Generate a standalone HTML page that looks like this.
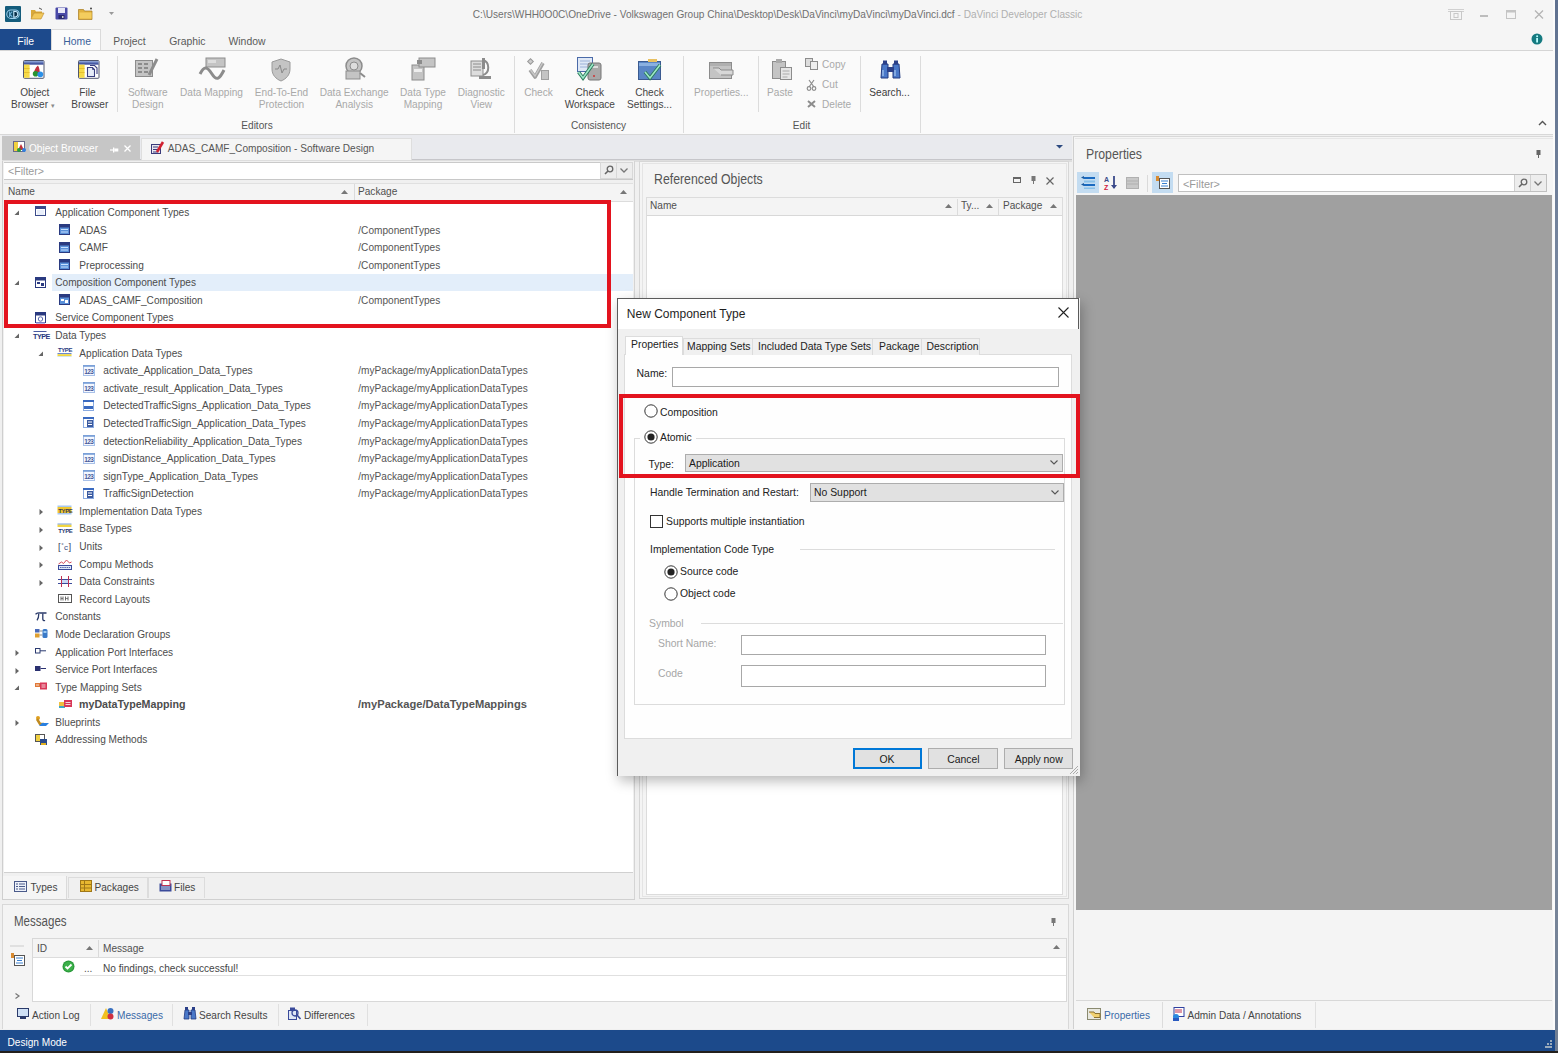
<!DOCTYPE html>
<html><head><meta charset="utf-8">
<style>
*{box-sizing:border-box;margin:0;padding:0}
html,body{width:1558px;height:1053px;overflow:hidden}
body{position:relative;background:#2a2622;font-family:"Liberation Sans",sans-serif;color:#444}
.a{position:absolute}
.t{position:absolute;white-space:nowrap;line-height:1}
svg{overflow:visible}
</style></head><body>

<div class="a" style="left:1555px;top:0px;width:3px;height:1053px;background:linear-gradient(#5f7190,#8d99aa 50%,#6f7d92)"></div>
<div class="a" style="left:0px;top:1051px;width:1558px;height:2px;background:#221f1c"></div>
<div class="a" style="left:0;top:0;width:1555px;height:1051px;background:#f5f5f5;overflow:hidden">
<div class="a" style="left:0px;top:0px;width:1555px;height:29px;background:#f5f5f5"></div>
<svg class="a" style="left:5px;top:6px" width="16" height="16" viewBox="0 0 16 16"><rect x="0" y="0" width="16" height="16" rx="1" fill="#145c7c"/><rect x="1.8" y="4" width="12.4" height="8.4" rx="4.2" fill="#0f4a66" stroke="#9cd0ee" stroke-width="1.1"/><path d="M4.5 5.5v5.5M5 8.2l2.2-2.5M5 8.2l2.2 2.6" stroke="#6ab0d8" stroke-width="1.2"/><path d="M8.8 5.3v5.8c2.8 0 4-1.2 4-2.9s-1.2-2.9-4-2.9z" fill="#0a3048" stroke="#c8ecff" stroke-width="1.1"/></svg>
<svg class="a" style="left:30px;top:7px" width="15" height="13" viewBox="0 0 15 13"><path d="M1 3h4l1 1.5h6v2H4L1 12z" fill="#d9a93a"/><path d="M1 12l3-6h10l-3 6z" fill="#f2c95c" stroke="#b8862a" stroke-width=".6"/><path d="M9 1l3 1.5" stroke="#555" stroke-width="1"/></svg>
<svg class="a" style="left:55px;top:7px" width="13" height="13" viewBox="0 0 13 13"><rect x="0.5" y="0.5" width="12" height="12" fill="#4a4aa8" rx="1"/><rect x="3" y="1" width="7" height="5" fill="#e8e8f8"/><rect x="3.5" y="8" width="6" height="4" fill="#2a2a70"/><rect x="7" y="9" width="1.5" height="2" fill="#ccc"/></svg>
<svg class="a" style="left:78px;top:7px" width="15" height="13" viewBox="0 0 15 13"><path d="M0.5 2.5h5l1 1.5h7.5v8.5H0.5z" fill="#e0b13e" stroke="#a87b20" stroke-width=".7"/><rect x="1.5" y="5.5" width="12" height="6" fill="#f3cd5e"/><circle cx="13" cy="1.5" r="1" fill="#444"/></svg>
<svg class="a" style="left:109px;top:12px" width="6" height="4" viewBox="0 0 6 4"><path d="M0 0h5l-2.5 3z" fill="#999"/></svg>
<div class="t" style="left:472.80px;top:10.00px;font-size:10.1px;color:#707070;font-weight:normal;">C:\Users\WHH0O0C\OneDrive - Volkswagen Group China\Desktop\Desk\DaVinci\myDaVinci\myDaVinci.dcf <span style="color:#b0b0b0">- DaVinci Developer Classic</span></div>
<svg class="a" style="left:1448px;top:9px" width="16" height="11" viewBox="0 0 16 11"><path d="M0 0.5h16M0 2.5h16" stroke="#d0d0d0"/><rect x="2.5" y="2.5" width="11" height="8" fill="none" stroke="#c8c8c8"/><rect x="6" y="4.5" width="4" height="4" fill="none" stroke="#c8c8c8"/></svg>
<div class="a" style="left:1480px;top:15px;width:8px;height:1.5px;background:#bdbdbd"></div>
<svg class="a" style="left:1506px;top:10px" width="11" height="9" viewBox="0 0 11 9"><rect x="0.5" y="0.5" width="9" height="8" fill="none" stroke="#c4c4c4"/><rect x="0.5" y="0.5" width="9" height="2" fill="#c4c4c4"/></svg>
<svg class="a" style="left:1534px;top:10px" width="10" height="9" viewBox="0 0 10 9"><path d="M1 0.5l8 8M9 0.5l-8 8" stroke="#b4b4b4" stroke-width="1.3"/></svg>
<div class="a" style="left:0px;top:29px;width:51px;height:21px;background:#1d4a8c"></div>
<div class="t" style="left:17.30px;top:37.00px;font-size:10.4px;color:#ffffff;font-weight:normal;">File</div>
<div class="a" style="left:51px;top:29px;width:50px;height:22px;background:#fbfbfb;border:1px solid #dadada;border-bottom:none"></div>
<div class="t" style="left:63.30px;top:37.00px;font-size:10.4px;color:#3a5f9a;font-weight:normal;">Home</div>
<div class="t" style="left:113.30px;top:37.00px;font-size:10.4px;color:#5a5a5a;font-weight:normal;">Project</div>
<div class="t" style="left:169.20px;top:37.00px;font-size:10.4px;color:#5a5a5a;font-weight:normal;">Graphic</div>
<div class="t" style="left:228.50px;top:37.00px;font-size:10.4px;color:#5a5a5a;font-weight:normal;">Window</div>
<svg class="a" style="left:1531px;top:33px" width="12" height="12" viewBox="0 0 12 12"><circle cx="6" cy="6" r="5.5" fill="#157a80"/><rect x="5.2" y="5" width="1.8" height="4.5" fill="#bff"/><circle cx="6.1" cy="3.3" r="1" fill="#bff"/></svg>
<div class="a" style="left:0px;top:50px;width:1553px;height:85px;background:#fafafa;border-top:1px solid #d5d5d5;border-bottom:1px solid #d8d8d8"></div>
<div class="a" style="left:117px;top:56px;width:1px;height:56px;background:#dcdcdc"></div>
<div class="a" style="left:514px;top:56px;width:1px;height:77px;background:#dcdcdc"></div>
<div class="a" style="left:683px;top:56px;width:1px;height:77px;background:#dcdcdc"></div>
<div class="a" style="left:758px;top:56px;width:1px;height:56px;background:#dcdcdc"></div>
<div class="a" style="left:860px;top:56px;width:1px;height:56px;background:#dcdcdc"></div>
<div class="a" style="left:920px;top:56px;width:1px;height:77px;background:#dcdcdc"></div>
<!--ribbon buttons-->
<div class="t" style="left:-25.20px;top:88.00px;width:120px;text-align:center;font-size:10.1px;color:#454545;font-weight:normal">Object</div>
<div class="t" style="left:-27.00px;top:100.00px;width:120px;text-align:center;font-size:10.1px;color:#454545;font-weight:normal">Browser <span style="font-size:7px;color:#8a8a8a">&#9662;</span></div>
<div class="t" style="left:27.50px;top:88.00px;width:120px;text-align:center;font-size:10.1px;color:#454545;font-weight:normal">File</div>
<div class="t" style="left:29.80px;top:100.00px;width:120px;text-align:center;font-size:10.1px;color:#454545;font-weight:normal">Browser</div>
<div class="t" style="left:87.80px;top:88.00px;width:120px;text-align:center;font-size:10.1px;color:#a9a9a9;font-weight:normal">Software</div>
<div class="t" style="left:87.80px;top:100.00px;width:120px;text-align:center;font-size:10.1px;color:#a9a9a9;font-weight:normal">Design</div>
<div class="t" style="left:151.50px;top:88.00px;width:120px;text-align:center;font-size:10.1px;color:#a9a9a9;font-weight:normal">Data Mapping</div>
<div class="t" style="left:221.50px;top:88.00px;width:120px;text-align:center;font-size:10.1px;color:#a9a9a9;font-weight:normal">End-To-End</div>
<div class="t" style="left:221.50px;top:100.00px;width:120px;text-align:center;font-size:10.1px;color:#a9a9a9;font-weight:normal">Protection</div>
<div class="t" style="left:294.20px;top:88.00px;width:120px;text-align:center;font-size:10.1px;color:#a9a9a9;font-weight:normal">Data Exchange</div>
<div class="t" style="left:294.20px;top:100.00px;width:120px;text-align:center;font-size:10.1px;color:#a9a9a9;font-weight:normal">Analysis</div>
<div class="t" style="left:363.00px;top:88.00px;width:120px;text-align:center;font-size:10.1px;color:#a9a9a9;font-weight:normal">Data Type</div>
<div class="t" style="left:363.00px;top:100.00px;width:120px;text-align:center;font-size:10.1px;color:#a9a9a9;font-weight:normal">Mapping</div>
<div class="t" style="left:421.30px;top:88.00px;width:120px;text-align:center;font-size:10.1px;color:#a9a9a9;font-weight:normal">Diagnostic</div>
<div class="t" style="left:421.30px;top:100.00px;width:120px;text-align:center;font-size:10.1px;color:#a9a9a9;font-weight:normal">View</div>
<div class="t" style="left:478.50px;top:88.00px;width:120px;text-align:center;font-size:10.1px;color:#a9a9a9;font-weight:normal">Check</div>
<div class="t" style="left:529.80px;top:88.00px;width:120px;text-align:center;font-size:10.1px;color:#454545;font-weight:normal">Check</div>
<div class="t" style="left:529.80px;top:100.00px;width:120px;text-align:center;font-size:10.1px;color:#454545;font-weight:normal">Workspace</div>
<div class="t" style="left:589.50px;top:88.00px;width:120px;text-align:center;font-size:10.1px;color:#454545;font-weight:normal">Check</div>
<div class="t" style="left:589.50px;top:100.00px;width:120px;text-align:center;font-size:10.1px;color:#454545;font-weight:normal">Settings...</div>
<div class="t" style="left:661.30px;top:88.00px;width:120px;text-align:center;font-size:10.1px;color:#a9a9a9;font-weight:normal">Properties...</div>
<div class="t" style="left:720.00px;top:88.00px;width:120px;text-align:center;font-size:10.1px;color:#a9a9a9;font-weight:normal">Paste</div>
<div class="t" style="left:822.00px;top:60.00px;font-size:10.1px;color:#a9a9a9;font-weight:normal;">Copy</div>
<div class="t" style="left:822.00px;top:80.00px;font-size:10.1px;color:#a9a9a9;font-weight:normal;">Cut</div>
<div class="t" style="left:822.00px;top:100.00px;font-size:10.1px;color:#a9a9a9;font-weight:normal;">Delete</div>
<div class="t" style="left:829.50px;top:88.00px;width:120px;text-align:center;font-size:10.1px;color:#3a3a3a;font-weight:normal">Search...</div>
<div class="t" style="left:197.00px;top:121.00px;width:120px;text-align:center;font-size:10.1px;color:#555;font-weight:normal">Editors</div>
<div class="t" style="left:538.50px;top:121.00px;width:120px;text-align:center;font-size:10.1px;color:#555;font-weight:normal">Consistency</div>
<div class="t" style="left:741.50px;top:121.00px;width:120px;text-align:center;font-size:10.1px;color:#555;font-weight:normal">Edit</div>
<svg class="a" style="left:1538px;top:120px" width="9" height="6" viewBox="0 0 9 6"><path d="M1 5l3.5-3.5L8 5" fill="none" stroke="#555" stroke-width="1.4"/></svg>
<svg class="a" style="left:23px;top:60px" width="22" height="19" viewBox="0 0 22 19"><defs><linearGradient id="tb" x1="0" y1="0" x2="0" y2="1"><stop offset="0" stop-color="#9ab0e0"/><stop offset="1" stop-color="#22348a"/></linearGradient></defs><rect x="0.5" y="0.5" width="20.5" height="17.8" rx="1" fill="#fff" stroke="#50566e"/><rect x="1" y="1" width="19.5" height="3.6" fill="url(#tb)"/><rect x="1" y="4.6" width="5.6" height="13.2" fill="#f6da48"/><path d="M1 8.5h5.6M1 12.5h5.6" stroke="#e2b82a" stroke-width=".8"/><path d="M10.5 14.5C11 10 13.5 6.5 15 5.5c1.2 2 2.2 5.5 1.5 8.5z" fill="#c2303e"/><circle cx="12.6" cy="13.8" r="2.8" fill="#2a9432"/><circle cx="17.3" cy="14.3" r="2.9" fill="#2a90e8"/></svg>
<svg class="a" style="left:78px;top:60px" width="22" height="19" viewBox="0 0 22 19"><defs><linearGradient id="tb" x1="0" y1="0" x2="0" y2="1"><stop offset="0" stop-color="#9ab0e0"/><stop offset="1" stop-color="#22348a"/></linearGradient></defs><rect x="0.5" y="0.5" width="20.5" height="17.8" rx="1" fill="#fff" stroke="#50566e"/><rect x="1" y="1" width="19.5" height="3.6" fill="url(#tb)"/><rect x="1" y="4.6" width="5.6" height="13.2" fill="#f6da48"/><path d="M1 8.5h5.6M1 12.5h5.6" stroke="#e2b82a" stroke-width=".8"/><path d="M9.5 7.5h5l2 2v7h-7z" fill="#e6ecf8" stroke="#3a3f80" stroke-width="1.1"/><path d="M12 5.5h4.5l2.5 2.5v6" fill="none" stroke="#3a3f80" stroke-width="1.1"/><path d="M14.5 7.5v2h2" fill="none" stroke="#3a3f80" stroke-width=".8"/></svg>
<svg class="a" style="left:135px;top:57px" width="24" height="21" viewBox="0 0 24 21"><rect x="0.5" y="3.5" width="17" height="16" fill="#c4c4c4" stroke="#8c8c8c"/><rect x="3" y="6" width="4" height="2" fill="#8c8c8c"/><rect x="9" y="6" width="4" height="2" fill="#8c8c8c"/><rect x="3" y="10" width="4" height="2" fill="#8c8c8c"/><rect x="9" y="10" width="4" height="2" fill="#8c8c8c"/><rect x="3" y="14" width="4" height="2" fill="#8c8c8c"/><rect x="9" y="14" width="4" height="2" fill="#8c8c8c"/><path d="M14 18L22 2" stroke="#8c8c8c" stroke-width="3"/></svg>
<svg class="a" style="left:199px;top:57px" width="27" height="23" viewBox="0 0 27 23"><rect x="7" y="1" width="19" height="9" fill="#c4c4c4" stroke="#8c8c8c"/><rect x="9" y="3" width="8" height="3" fill="#ddd"/><path d="M1 17c4-8 7-8 12 0s8 4 12-4" fill="none" stroke="#8c8c8c" stroke-width="3"/></svg>
<svg class="a" style="left:271px;top:58px" width="20" height="23" viewBox="0 0 20 23"><path d="M10 1l9 3v7c0 6-4 10-9 12C5 21 1 17 1 11V4z" fill="#c4c4c4" stroke="#9a9a9a"/><path d="M4 11h3l2-4 2 8 2-4h3" fill="none" stroke="#888" stroke-width="1"/></svg>
<svg class="a" style="left:343px;top:57px" width="24" height="24" viewBox="0 0 24 24"><circle cx="11" cy="9" r="8" fill="#c4c4c4" stroke="#8c8c8c" stroke-width="1.5"/><circle cx="11" cy="9" r="4" fill="#ddd" stroke="#8c8c8c"/><rect x="3" y="14" width="14" height="8" fill="#c4c4c4" stroke="#8c8c8c"/><path d="M17 16l5 4" stroke="#8c8c8c" stroke-width="2"/></svg>
<svg class="a" style="left:411px;top:57px" width="25" height="24" viewBox="0 0 25 24"><rect x="1" y="8" width="12" height="15" fill="#c4c4c4" stroke="#8c8c8c"/><rect x="3" y="12" width="8" height="3" fill="#eee"/><rect x="8" y="1" width="16" height="9" fill="#c4c4c4" stroke="#8c8c8c"/><rect x="6" y="3" width="5" height="4" fill="#8c8c8c"/></svg>
<svg class="a" style="left:470px;top:57px" width="23" height="24" viewBox="0 0 23 24"><rect x="1" y="4" width="12" height="15" fill="#ddd" stroke="#8c8c8c"/><path d="M3 7h8M3 10h8M3 13h8" stroke="#8c8c8c"/><path d="M13 3c7 2 7 13 0 15" fill="none" stroke="#8c8c8c" stroke-width="2"/><rect x="12" y="1" width="3" height="11" fill="#8c8c8c"/><rect x="9" y="19" width="12" height="3" fill="#8c8c8c"/></svg>
<svg class="a" style="left:527px;top:57px" width="23" height="24" viewBox="0 0 23 24"><rect x="1.5" y="2.5" width="4" height="4" fill="#ccc" stroke="#999" transform="rotate(45 3.5 4.5)"/><path d="M3 13l5 7 8-14" fill="none" stroke="#a0a0a0" stroke-width="3.6" stroke-linejoin="round"/><path d="M3.5 13l4.5 6 7.5-13" fill="none" stroke="#c8c8c8" stroke-width="1.4"/><rect x="14.5" y="13.5" width="7" height="9" fill="#c4c4c4" stroke="#a0a0a0"/></svg>
<svg class="a" style="left:577px;top:57px" width="25" height="24" viewBox="0 0 25 24"><rect x="0.5" y="0.5" width="15" height="14" fill="#dfe8f6" stroke="#4a6aa8"/><path d="M3 4h10M3 7h10M3 10h8" stroke="#9cb2d8"/><rect x="11" y="6" width="13" height="17" rx="2" fill="#a8a8a8" stroke="#777"/><rect x="14" y="9" width="7" height="2" fill="#ddd"/><circle cx="17" cy="19" r="1" fill="#c33"/><path d="M1.5 15l4.5 6 10-14" fill="none" stroke="#2a7a5a" stroke-width="3.4"/><path d="M1.5 15l4.5 6 10-14" fill="none" stroke="#9ee8c8" stroke-width="1.6"/></svg>
<svg class="a" style="left:638px;top:58px" width="24" height="23" viewBox="0 0 24 23"><rect x="0.5" y="3.5" width="22" height="18" fill="#5a86c6" stroke="#3a5a90"/><rect x="10" y="1" width="9" height="3" fill="#e8c060"/><rect x="1" y="5" width="21" height="3" fill="#8ab0e0"/><path d="M7 14l5 6 10-13" fill="none" stroke="#2a7a5a" stroke-width="3.4"/><path d="M7 14l5 6 10-13" fill="none" stroke="#9ee8c8" stroke-width="1.6"/></svg>
<svg class="a" style="left:709px;top:60px" width="26" height="20" viewBox="0 0 26 20"><rect x="0.5" y="2.5" width="22" height="16" fill="#c4c4c4" stroke="#8c8c8c"/><rect x="1" y="3" width="21" height="3" fill="#b0b0b0"/><path d="M4 8h6l2 2h12v5H12" fill="#d8d8d8" stroke="#8c8c8c"/></svg>
<svg class="a" style="left:772px;top:58px" width="21" height="23" viewBox="0 0 21 23"><rect x="0.5" y="3.5" width="13" height="17" fill="#c4c4c4" stroke="#8c8c8c"/><rect x="4" y="1" width="6" height="4" fill="#aaa"/><rect x="8.5" y="9.5" width="11" height="12" fill="#e6e6e6" stroke="#8c8c8c"/><path d="M10.5 13h7M10.5 16h7M10.5 19h5" stroke="#aaa"/></svg>
<svg class="a" style="left:805px;top:58px" width="13" height="12" viewBox="0 0 13 12"><rect x="0.5" y="0.5" width="7" height="8" fill="#ddd" stroke="#8c8c8c"/><rect x="5.5" y="3.5" width="7" height="8" fill="#eee" stroke="#8c8c8c"/></svg>
<svg class="a" style="left:807px;top:80px" width="9" height="11" viewBox="0 0 9 11"><path d="M2 0l5 7M7 0L2 7" stroke="#8c8c8c" stroke-width="1.2"/><circle cx="2" cy="8.5" r="1.8" fill="none" stroke="#8c8c8c" stroke-width="1.2"/><circle cx="7" cy="8.5" r="1.8" fill="none" stroke="#8c8c8c" stroke-width="1.2"/></svg>
<svg class="a" style="left:807px;top:100px" width="9" height="8" viewBox="0 0 9 8"><path d="M1 1l7 6M8 1L1 7" stroke="#8c8c8c" stroke-width="2"/></svg>
<svg class="a" style="left:880px;top:60px" width="21" height="20" viewBox="0 0 21 20"><path d="M2 4h6v14H1z" fill="#4a78c8" stroke="#223a80"/><path d="M13 4h6l1 14h-7z" fill="#4a78c8" stroke="#223a80"/><rect x="3" y="0.5" width="4" height="4" fill="#2a3f88"/><rect x="14" y="0.5" width="4" height="4" fill="#2a3f88"/><rect x="7" y="7" width="7" height="5" fill="#2a3f88"/><path d="M3 10v6M15 10v6" stroke="#a8c8f0" stroke-width="1.2"/></svg>
<div class="a" style="left:0px;top:135px;width:1555px;height:896px;background:#f0f0f0"></div>
<div class="a" style="left:2px;top:135px;width:1070px;height:24px;background:#e9eaee"></div>
<div class="a" style="left:2px;top:159px;width:1070px;height:1px;background:#c6c6ca"></div>
<div class="a" style="left:2px;top:160px;width:1070px;height:2px;background:#dedede"></div>
<div class="a" style="left:2px;top:136px;width:138px;height:24px;background:#c6c6c6"></div>
<svg class="a" style="left:13px;top:141px" width="14" height="12" viewBox="0 0 14 12"><rect x="0.5" y="0.5" width="11" height="10" fill="#fff" stroke="#6a6a8a"/><rect x="1" y="1" width="4" height="9" fill="#f0d040"/><path d="M5 9l3-6 3 6z" fill="#c03038"/><circle cx="6" cy="9" r="2" fill="#2a9a3a"/><circle cx="11" cy="9" r="2" fill="#3080e0"/></svg>
<div class="t" style="left:29.00px;top:144.00px;font-size:10.1px;color:#ffffff;font-weight:normal;">Object Browser</div>
<svg class="a" style="left:110px;top:146px" width="9" height="8" viewBox="0 0 9 8"><path d="M0 4h3" stroke="#fff" stroke-width="1.2"/><rect x="3" y="1.5" width="1.3" height="5" fill="#fff"/><rect x="4.3" y="2.5" width="4" height="3" fill="#fff"/></svg>
<svg class="a" style="left:124px;top:145px" width="7" height="7" viewBox="0 0 7 7"><path d="M0.5 0.5l6 6M6.5 0.5l-6 6" stroke="#fff" stroke-width="1.3"/></svg>
<div class="a" style="left:141px;top:138px;width:271px;height:22px;background:#f5f5f5;border:1px solid #dedede;border-bottom:none"></div>
<svg class="a" style="left:151px;top:141px" width="14" height="13" viewBox="0 0 14 13"><rect x="0.5" y="3.5" width="9" height="9" fill="#e8e8f0" stroke="#3a3a7a"/><path d="M2 6h5M2 8.5h5M2 11h5" stroke="#3a3a7a"/><path d="M6 11l6-10" stroke="#d02030" stroke-width="2.6"/></svg>
<div class="t" style="left:167.80px;top:144.00px;font-size:10.1px;color:#555;font-weight:normal;">ADAS_CAMF_Composition - Software Design</div>
<svg class="a" style="left:1056px;top:145px" width="8" height="4" viewBox="0 0 8 4"><path d="M0 0h7l-3.5 3.5z" fill="#2d4a80"/></svg>
<div class="a" style="left:2px;top:161px;width:633px;height:739px;background:#f0f0f0;border-left:1px solid #cfcfcf;border-right:1px solid #d4d4d4"></div>
<div class="a" style="left:4px;top:162px;width:629px;height:18px;background:#fff;border-top:1px solid #cacaca;border-bottom:1px solid #c8c8c8"></div>
<div class="t" style="left:8.00px;top:167.00px;font-size:10.1px;color:#9a9a9a;font-weight:normal;transform:scaleX(1.0514);transform-origin:0 0;">&lt;Filter&gt;</div>
<div class="a" style="left:600px;top:162px;width:17px;height:17px;background:#ededed;border:1px solid #d8d8d8"></div>
<div class="a" style="left:616px;top:162px;width:17px;height:17px;background:#ededed;border:1px solid #d8d8d8"></div>
<svg class="a" style="left:604px;top:165px" width="10" height="10" viewBox="0 0 10 10"><circle cx="6" cy="4" r="2.8" fill="none" stroke="#666" stroke-width="1.3"/><path d="M4 6L1 9" stroke="#666" stroke-width="1.6"/></svg>
<svg class="a" style="left:620px;top:168px" width="8" height="5" viewBox="0 0 8 5"><path d="M0.5 0.5L4 4l3.5-3.5" fill="none" stroke="#777" stroke-width="1.3"/></svg>
<div class="a" style="left:4px;top:183px;width:629px;height:19px;background:#f4f4f4;border-top:1px solid #e0e0e0;border-bottom:1px solid #dcdcdc"></div>
<div class="a" style="left:354px;top:184px;width:1px;height:17px;background:#dadada"></div>
<div class="t" style="left:8.00px;top:187.00px;font-size:10.1px;color:#505050;font-weight:normal;">Name</div>
<div class="t" style="left:358.00px;top:187.00px;font-size:10.1px;color:#505050;font-weight:normal;">Package</div>
<svg class="a" style="left:341px;top:190px" width="7" height="4" viewBox="0 0 7 4"><path d="M0 4h7L3.5 0z" fill="#777"/></svg>
<svg class="a" style="left:620px;top:190px" width="7" height="4" viewBox="0 0 7 4"><path d="M0 4h7L3.5 0z" fill="#777"/></svg>
<div class="a" style="left:4px;top:202px;width:629px;height:671px;background:#fff"></div>
<div class="a" style="left:4px;top:872px;width:629px;height:1px;background:#d0d0d0"></div>
<div class="a" style="left:3px;top:899px;width:632px;height:1px;background:#d0d0d0"></div>
<div class="a" style="left:3px;top:876px;width:64px;height:23px;background:#f5f5f5;border-right:1px solid #dadada"></div>
<div class="a" style="left:68px;top:877px;width:80px;height:21px;background:#f0f0f0;border:1px solid #dcdcdc;border-bottom:none"></div>
<div class="a" style="left:148px;top:877px;width:57px;height:21px;background:#f0f0f0;border:1px solid #dcdcdc;border-bottom:none"></div>
<svg class="a" style="left:14px;top:881px" width="13" height="11" viewBox="0 0 13 11"><rect x="0.5" y="0.5" width="12" height="10" fill="#eef2fa" stroke="#4a5a8a"/><path d="M2 3h2M5 3h6M2 5.5h2M5 5.5h6M2 8h2M5 8h6" stroke="#4a5a8a"/></svg>
<div class="t" style="left:30.50px;top:883.00px;font-size:10.1px;color:#454545;font-weight:normal;">Types</div>
<svg class="a" style="left:80px;top:880px" width="12" height="12" viewBox="0 0 12 12"><rect x="0.5" y="0.5" width="11" height="11" fill="#e8b830" stroke="#a07818"/><path d="M0.5 4.5h11M0.5 8h11M4.5 0.5v11" stroke="#a07818"/></svg>
<div class="t" style="left:94.50px;top:883.00px;font-size:10.1px;color:#454545;font-weight:normal;">Packages</div>
<svg class="a" style="left:159px;top:880px" width="13" height="12" viewBox="0 0 13 12"><rect x="0.5" y="3.5" width="12" height="8" fill="#3a4a9a"/><rect x="3" y="0.5" width="8" height="5" fill="#fff" stroke="#c03050"/><path d="M2 7h9M2 9h9" stroke="#cfd8f0"/></svg>
<div class="t" style="left:174.00px;top:883.00px;font-size:10.1px;color:#454545;font-weight:normal;">Files</div>
<div class="a" style="left:639px;top:161px;width:430px;height:738px;background:#f4f4f4;border:1px solid #d6d6d6"></div>
<div class="a" style="left:642px;top:163px;width:425px;height:734px;border:1px solid #e4e4e4"></div>
<div class="t" style="left:654.30px;top:172.00px;font-size:14px;color:#555;font-weight:normal;transform:scaleX(0.8785);transform-origin:0 0;">Referenced Objects</div>
<svg class="a" style="left:1013px;top:177px" width="8" height="6" viewBox="0 0 8 6"><rect x="0.5" y="0.5" width="7" height="5" fill="none" stroke="#666"/><rect x="0.5" y="0.5" width="7" height="1.5" fill="#666"/></svg>
<svg class="a" style="left:1031px;top:176px" width="5" height="8" viewBox="0 0 5 8"><rect x="0.5" y="0" width="4" height="5" fill="#777"/><rect x="2" y="5" width="1" height="3" fill="#777"/></svg>
<svg class="a" style="left:1046px;top:177px" width="8" height="8" viewBox="0 0 8 8"><path d="M0.5 0.5l7 7M7.5 0.5l-7 7" stroke="#666" stroke-width="1.2"/></svg>
<div class="a" style="left:646px;top:197px;width:417px;height:698px;background:#fff;border:1px solid #dcdcdc"></div>
<div class="a" style="left:647px;top:198px;width:415px;height:18px;background:#f4f4f4;border-bottom:1px solid #d8d8d8"></div>
<div class="a" style="left:957px;top:199px;width:1px;height:16px;background:#dcdcdc"></div>
<div class="a" style="left:998px;top:199px;width:1px;height:16px;background:#dcdcdc"></div>
<div class="t" style="left:650.00px;top:201.00px;font-size:10.1px;color:#505050;font-weight:normal;">Name</div>
<div class="t" style="left:961.00px;top:201.00px;font-size:10.1px;color:#505050;font-weight:normal;">Ty...</div>
<div class="t" style="left:1003.00px;top:201.00px;font-size:10.1px;color:#505050;font-weight:normal;">Package</div>
<svg class="a" style="left:945px;top:204px" width="7" height="4" viewBox="0 0 7 4"><path d="M0 4h7L3.5 0z" fill="#777"/></svg>
<svg class="a" style="left:986px;top:204px" width="7" height="4" viewBox="0 0 7 4"><path d="M0 4h7L3.5 0z" fill="#777"/></svg>
<svg class="a" style="left:1050px;top:204px" width="7" height="4" viewBox="0 0 7 4"><path d="M0 4h7L3.5 0z" fill="#777"/></svg>
<div class="a" style="left:1073px;top:136px;width:480px;height:893px;background:#f5f5f5;border-left:1px solid #d0d0d0;border-top:1px solid #d8d8d8"></div>
<div class="a" style="left:1075px;top:138px;width:478px;height:1px;background:#e6e6e6"></div>
<div class="t" style="left:1086.00px;top:147.00px;font-size:14px;color:#555;font-weight:normal;transform:scaleX(0.8776);transform-origin:0 0;">Properties</div>
<svg class="a" style="left:1536px;top:150px" width="5" height="8" viewBox="0 0 5 8"><rect x="0.5" y="0" width="4" height="5" fill="#666"/><rect x="2" y="5" width="1" height="3" fill="#666"/></svg>
<div class="a" style="left:1077px;top:172px;width:22px;height:21px;background:#c3dcf1"></div>
<svg class="a" style="left:1081px;top:176px" width="14" height="13" viewBox="0 0 14 13"><path d="M0 1.5l3-1.5v3z" fill="#1a5aa0"/><rect x="3" y="1" width="11" height="2" fill="#1a6ac0"/><rect x="3" y="4.5" width="11" height="2" fill="#8ac0e8"/><path d="M0 8.5l3-1.5v3z" fill="#1a5aa0"/><rect x="3" y="8" width="11" height="2" fill="#1a6ac0"/><rect x="3" y="11.5" width="11" height="1.5" fill="#8ac0e8"/></svg>
<svg class="a" style="left:1104px;top:176px" width="14" height="14" viewBox="0 0 14 14"><text x="0" y="6" font-size="7" font-weight="bold" fill="#3a4a8a" font-family="Liberation Sans">A</text><text x="0" y="13.5" font-size="7" font-weight="bold" fill="#d02040" font-family="Liberation Sans">Z</text><path d="M10 0v12" stroke="#3a4a8a" stroke-width="1.8"/><path d="M7 9l3 4 3-4z" fill="#3a4a8a"/></svg>
<svg class="a" style="left:1126px;top:177px" width="13" height="12" viewBox="0 0 13 12"><rect x="0.5" y="0.5" width="12" height="11" fill="#c8c8c8" stroke="#b0b0b0"/><path d="M1 4h11M1 7h11" stroke="#b0b0b0"/></svg>
<div class="a" style="left:1147px;top:175px;width:1px;height:17px;background:#dadada"></div>
<div class="a" style="left:1152px;top:172px;width:21px;height:21px;background:#c3dcf1"></div>
<svg class="a" style="left:1156px;top:176px" width="14" height="13" viewBox="0 0 14 13"><rect x="3.5" y="2.5" width="10" height="10" fill="#fff" stroke="#555"/><rect x="0" y="0" width="3" height="5" fill="#d88a30"/><path d="M5 5h7M6 7.5h5M5 10h7" stroke="#3a80d0"/></svg>
<div class="a" style="left:1178px;top:174px;width:369px;height:18px;background:#fff;border:1px solid #c0c0c0"></div>
<div class="t" style="left:1182.60px;top:180.00px;font-size:10.1px;color:#9a9a9a;font-weight:normal;transform:scaleX(1.0806);transform-origin:0 0;">&lt;Filter&gt;</div>
<div class="a" style="left:1514px;top:175px;width:17px;height:16px;background:#ededed;border-left:1px solid #d0d0d0"></div>
<div class="a" style="left:1530px;top:175px;width:16px;height:16px;background:#ededed;border-left:1px solid #d0d0d0"></div>
<svg class="a" style="left:1518px;top:178px" width="10" height="10" viewBox="0 0 10 10"><circle cx="6" cy="4" r="2.8" fill="none" stroke="#666" stroke-width="1.3"/><path d="M4 6L1 9" stroke="#666" stroke-width="1.6"/></svg>
<svg class="a" style="left:1534px;top:181px" width="8" height="5" viewBox="0 0 8 5"><path d="M0.5 0.5L4 4l3.5-3.5" fill="none" stroke="#777" stroke-width="1.3"/></svg>
<div class="a" style="left:1076px;top:195px;width:476px;height:715px;background:#a0a0a0"></div>
<div class="a" style="left:1076px;top:910px;width:476px;height:91px;background:#f4f4f4;border-bottom:1px solid #d8d8d8"></div>
<div class="a" style="left:1076px;top:1002px;width:87px;height:26px;background:#f5f5f5;border-right:1px solid #dcdcdc"></div>
<svg class="a" style="left:1087px;top:1008px" width="14" height="12" viewBox="0 0 14 12"><rect x="0.5" y="0.5" width="13" height="11" fill="#e8e8e0" stroke="#8a8a70"/><path d="M2 4h5l1 1.5h5v4H7" fill="#f0d070" stroke="#8a7030"/></svg>
<div class="t" style="left:1104.00px;top:1011.00px;font-size:10.1px;color:#3a6aa8;font-weight:normal;">Properties</div>
<div class="a" style="left:1163px;top:1002px;width:153px;height:26px;background:#f5f5f5;border-right:1px solid #e0e0e0"></div>
<svg class="a" style="left:1172px;top:1007px" width="13" height="14" viewBox="0 0 13 14"><rect x="2" y="0.5" width="10" height="9" fill="#fff" stroke="#3040a0"/><path d="M3 3h7M3 5h7" stroke="#c03050"/><circle cx="4" cy="10" r="3" fill="#2a8ae0"/><rect x="1" y="11" width="6" height="3" fill="#2a5ac0"/></svg>
<div class="t" style="left:1187.50px;top:1011.00px;font-size:10.1px;color:#454545;font-weight:normal;">Admin Data / Annotations</div>
<div class="a" style="left:2px;top:904px;width:1067px;height:125px;background:#f4f4f4;border:1px solid #d8d8d8;border-bottom:none"></div>
<div class="t" style="left:14.30px;top:914.00px;font-size:14px;color:#555;font-weight:normal;transform:scaleX(0.8244);transform-origin:0 0;">Messages</div>
<svg class="a" style="left:1051px;top:918px" width="5" height="8" viewBox="0 0 5 8"><rect x="0.5" y="0" width="4" height="5" fill="#777"/><rect x="2" y="5" width="1" height="3" fill="#777"/></svg>
<div class="a" style="left:10px;top:945px;width:14px;height:2px;background:#e0e0e0"></div>
<svg class="a" style="left:11px;top:953px" width="14" height="13" viewBox="0 0 14 13"><rect x="3.5" y="2.5" width="10" height="10" fill="#fff" stroke="#555"/><rect x="0" y="0" width="3" height="5" fill="#d88a30"/><path d="M5 5h7M6 7.5h5M5 10h7" stroke="#3a80d0"/></svg>
<svg class="a" style="left:15px;top:993px" width="5" height="6" viewBox="0 0 5 6"><path d="M0.5 0.5L4 3 0.5 5.5" fill="none" stroke="#777" stroke-width="1.2"/></svg>
<div class="a" style="left:32px;top:938px;width:1035px;height:64px;background:#fff;border:1px solid #d8d8d8"></div>
<div class="a" style="left:33px;top:939px;width:1033px;height:19px;background:#f4f4f4;border-bottom:1px solid #dcdcdc"></div>
<div class="a" style="left:98px;top:940px;width:1px;height:17px;background:#dadada"></div>
<div class="t" style="left:37.00px;top:944.00px;font-size:10.1px;color:#505050;font-weight:normal;">ID</div>
<div class="t" style="left:103.00px;top:944.00px;font-size:10.1px;color:#505050;font-weight:normal;">Message</div>
<svg class="a" style="left:86px;top:946px" width="7" height="4" viewBox="0 0 7 4"><path d="M0 4h7L3.5 0z" fill="#777"/></svg>
<svg class="a" style="left:1053px;top:945px" width="7" height="4" viewBox="0 0 7 4"><path d="M0 4h7L3.5 0z" fill="#777"/></svg>
<div class="a" style="left:80px;top:975px;width:986px;height:1px;background:#e0e0e0"></div>
<svg class="a" style="left:62px;top:960px" width="13" height="13" viewBox="0 0 13 13"><circle cx="6.5" cy="6.5" r="6" fill="#2a9a3a"/><circle cx="6.5" cy="6.5" r="4.8" fill="#3cb04a"/><path d="M3.5 6.5l2 2 4-4" fill="none" stroke="#fff" stroke-width="1.8"/></svg>
<div class="t" style="left:84.00px;top:964.00px;font-size:10.1px;color:#505050;font-weight:normal;">...</div>
<div class="t" style="left:103.00px;top:964.00px;font-size:10.1px;color:#454545;font-weight:normal;">No findings, check successful!</div>
<div class="a" style="left:90px;top:1004px;width:1px;height:22px;background:#e0e0e0"></div>
<div class="a" style="left:172px;top:1004px;width:1px;height:22px;background:#e0e0e0"></div>
<div class="a" style="left:278px;top:1004px;width:1px;height:22px;background:#e0e0e0"></div>
<div class="a" style="left:367px;top:1004px;width:1px;height:22px;background:#e0e0e0"></div>
<svg class="a" style="left:17px;top:1008px" width="12" height="12" viewBox="0 0 12 12"><rect x="0.5" y="0.5" width="11" height="8" fill="#cfe0f5" stroke="#2a3a6a"/><rect x="3" y="9" width="6" height="2" fill="#2a3a6a"/></svg>
<div class="t" style="left:32.00px;top:1011.00px;font-size:10.1px;color:#454545;font-weight:normal;">Action Log</div>
<svg class="a" style="left:101px;top:1007px" width="13" height="13" viewBox="0 0 13 13"><path d="M5 1l5 11H0z" fill="#f0c020"/><circle cx="9.5" cy="4" r="3" fill="#3a70c0"/><circle cx="9.5" cy="9.5" r="3" fill="#d03040"/></svg>
<div class="t" style="left:117.00px;top:1011.00px;font-size:10.1px;color:#3a6aa8;font-weight:normal;">Messages</div>
<svg class="a" style="left:184px;top:1007px" width="12" height="13" viewBox="0 0 12 13"><path d="M1 3h4v9H0z" fill="#4a78c8" stroke="#223a80" stroke-width=".8"/><path d="M7 3h4l1 9H7z" fill="#4a78c8" stroke="#223a80" stroke-width=".8"/><rect x="4" y="5" width="4" height="3" fill="#2a3f88"/><rect x="1" y="0" width="3" height="3" fill="#2a3f88"/><rect x="8" y="0" width="3" height="3" fill="#2a3f88"/></svg>
<div class="t" style="left:199.00px;top:1011.00px;font-size:10.1px;color:#454545;font-weight:normal;">Search Results</div>
<svg class="a" style="left:288px;top:1007px" width="13" height="13" viewBox="0 0 13 13"><rect x="0.5" y="3.5" width="8" height="9" fill="#dfe6f5" stroke="#3a4a9a"/><circle cx="7" cy="6" r="3" fill="none" stroke="#3a4a9a" stroke-width="1.3"/><path d="M9 8l3.5 4" stroke="#3a4a9a" stroke-width="1.6"/><rect x="2" y="0.5" width="5" height="3" fill="#3a4a9a"/></svg>
<div class="t" style="left:304.00px;top:1011.00px;font-size:10.1px;color:#454545;font-weight:normal;">Differences</div>
<div class="a" style="left:0px;top:1030px;width:1555px;height:21px;background:#1c4a8b"></div>
<div class="t" style="left:7.50px;top:1038.00px;font-size:10.1px;color:#ffffff;font-weight:normal;">Design Mode</div>
<svg class="a" style="left:1545px;top:1040px" width="8" height="8" viewBox="0 0 8 8"><rect x="5" y="0" width="2" height="2" fill="#9ab"/><rect x="2" y="3" width="2" height="2" fill="#9ab"/><rect x="5" y="3" width="2" height="2" fill="#9ab"/><rect x="0" y="6" width="7" height="2" fill="#9ab"/></svg>
<div class="a" style="left:1553px;top:0px;width:2px;height:1030px;background:#fbfbfb"></div>
<svg class="a" style="left:14px;top:210px" width="6" height="6" viewBox="0 0 6 6"><path d="M5 0.5v4.5H0.5z" fill="#666"/></svg>
<svg class="a" style="left:34.5px;top:206px" width="13" height="12" viewBox="0 0 13 12"><rect x="0.5" y="0.5" width="10" height="9" fill="#fff" stroke="#3a4a8a"/><rect x="1" y="1" width="9" height="2" fill="#3a4a8a"/><rect x="2" y="4" width="7" height="5" fill="#e8eefa"/></svg>
<div class="t" style="left:55.30px;top:208.00px;font-size:10.1px;color:#4c4c4c;font-weight:normal;">Application Component Types</div>
<svg class="a" style="left:58.5px;top:224px" width="13" height="12" viewBox="0 0 13 12"><rect x="0.5" y="0.5" width="10" height="10" fill="#5a90d8" stroke="#2a3a80"/><rect x="1" y="1" width="9" height="2.5" fill="#2a3a80"/><path d="M2 5.5h7M2 8h7" stroke="#c8e0ff" stroke-width="1"/></svg>
<div class="t" style="left:79.30px;top:226.00px;font-size:10.1px;color:#4c4c4c;font-weight:normal;">ADAS</div>
<div class="t" style="left:358.30px;top:226.00px;font-size:10.1px;color:#555555;font-weight:normal;">/ComponentTypes</div>
<svg class="a" style="left:58.5px;top:242px" width="13" height="12" viewBox="0 0 13 12"><rect x="0.5" y="0.5" width="10" height="10" fill="#5a90d8" stroke="#2a3a80"/><rect x="1" y="1" width="9" height="2.5" fill="#2a3a80"/><path d="M2 5.5h7M2 8h7" stroke="#c8e0ff" stroke-width="1"/></svg>
<div class="t" style="left:79.30px;top:243.00px;font-size:10.1px;color:#4c4c4c;font-weight:normal;">CAMF</div>
<div class="t" style="left:358.30px;top:243.00px;font-size:10.1px;color:#555555;font-weight:normal;">/ComponentTypes</div>
<svg class="a" style="left:58.5px;top:259px" width="13" height="12" viewBox="0 0 13 12"><rect x="0.5" y="0.5" width="10" height="10" fill="#5a90d8" stroke="#2a3a80"/><rect x="1" y="1" width="9" height="2.5" fill="#2a3a80"/><path d="M2 5.5h7M2 8h7" stroke="#c8e0ff" stroke-width="1"/></svg>
<div class="t" style="left:79.30px;top:261.00px;font-size:10.1px;color:#4c4c4c;font-weight:normal;">Preprocessing</div>
<div class="t" style="left:358.30px;top:261.00px;font-size:10.1px;color:#555555;font-weight:normal;">/ComponentTypes</div>
<div class="a" style="left:52px;top:273.72px;width:581px;height:17px;background:#e3eefa"></div>
<svg class="a" style="left:14px;top:280px" width="6" height="6" viewBox="0 0 6 6"><path d="M5 0.5v4.5H0.5z" fill="#666"/></svg>
<svg class="a" style="left:34.5px;top:277px" width="13" height="12" viewBox="0 0 13 12"><rect x="0.5" y="0.5" width="10" height="10" fill="#fff" stroke="#2a3a80"/><rect x="1" y="1" width="9" height="2.5" fill="#2a3a80"/><rect x="2" y="5" width="3" height="2" fill="#2a3a80"/><rect x="6" y="6" width="3" height="3" fill="#2a3a80"/></svg>
<div class="t" style="left:55.30px;top:278.00px;font-size:10.1px;color:#4c4c4c;font-weight:normal;">Composition Component Types</div>
<svg class="a" style="left:58.5px;top:294px" width="13" height="12" viewBox="0 0 13 12"><rect x="0.5" y="0.5" width="10" height="10" fill="#5a90d8" stroke="#2a3a80"/><rect x="1" y="1" width="9" height="2.5" fill="#2a3a80"/><rect x="2" y="5" width="3" height="2" fill="#fff"/><rect x="6" y="6" width="3" height="3" fill="#fff"/></svg>
<div class="t" style="left:79.30px;top:296.00px;font-size:10.1px;color:#4c4c4c;font-weight:normal;">ADAS_CAMF_Composition</div>
<div class="t" style="left:358.30px;top:296.00px;font-size:10.1px;color:#555555;font-weight:normal;">/ComponentTypes</div>
<svg class="a" style="left:34.5px;top:312px" width="13" height="12" viewBox="0 0 13 12"><rect x="0.5" y="0.5" width="10" height="10" fill="#fff" stroke="#2a3a80"/><rect x="1" y="1" width="9" height="2.5" fill="#2a3a80"/><circle cx="5.5" cy="7" r="2.2" fill="none" stroke="#5a6ab0"/><path d="M1 11h9" stroke="#9aa0e0" stroke-width="1.5"/></svg>
<div class="t" style="left:55.30px;top:313.00px;font-size:10.1px;color:#4c4c4c;font-weight:normal;">Service Component Types</div>
<svg class="a" style="left:14px;top:333px" width="6" height="6" viewBox="0 0 6 6"><path d="M5 0.5v4.5H0.5z" fill="#666"/></svg>
<svg class="a" style="left:34.5px;top:330px" width="13" height="12" viewBox="0 0 13 12"><g transform="translate(-2,0)"><path d="M0.5 1.5h13" stroke="#4a5aa0" stroke-width="1"/><text x="0" y="8.6" font-size="7.2" font-weight="bold" fill="#2a3a80" font-family="Liberation Sans" letter-spacing="-0.5" transform="scale(1,1)">TYPE</text></g></svg>
<div class="t" style="left:55.30px;top:331.00px;font-size:10.1px;color:#4c4c4c;font-weight:normal;">Data Types</div>
<svg class="a" style="left:38px;top:351px" width="6" height="6" viewBox="0 0 6 6"><path d="M5 0.5v4.5H0.5z" fill="#666"/></svg>
<svg class="a" style="left:58.5px;top:347px" width="13" height="12" viewBox="0 0 13 12"><g transform="translate(-1.5,0)"><text x="0.5" y="5.2" font-size="6" font-weight="bold" fill="#2a3a80" font-family="Liberation Sans" letter-spacing="-0.4">TYPE</text><rect x="0" y="6" width="14" height="1.2" fill="#6a8ad0"/><rect x="0" y="7.2" width="14" height="2" fill="#f2d640"/><rect x="0" y="9.2" width="14" height="0.8" fill="#c8e0f0"/></g></svg>
<div class="t" style="left:79.30px;top:349.00px;font-size:10.1px;color:#4c4c4c;font-weight:normal;">Application Data Types</div>
<svg class="a" style="left:82.5px;top:365px" width="13" height="12" viewBox="0 0 13 12"><rect x="0.5" y="0.5" width="11" height="10" fill="#f4f8ff" stroke="#a8c0e8"/><rect x="0" y="0" width="12" height="1.8" fill="#7aa0d8"/><text x="1.2" y="8.8" font-size="6.5" font-weight="bold" fill="#4a5a9a" font-family="Liberation Sans" letter-spacing="-0.6">123</text></svg>
<div class="t" style="left:103.30px;top:366.00px;font-size:10.1px;color:#4c4c4c;font-weight:normal;">activate_Application_Data_Types</div>
<div class="t" style="left:358.30px;top:366.00px;font-size:10.1px;color:#555555;font-weight:normal;">/myPackage/myApplicationDataTypes</div>
<svg class="a" style="left:82.5px;top:382px" width="13" height="12" viewBox="0 0 13 12"><rect x="0.5" y="0.5" width="11" height="10" fill="#f4f8ff" stroke="#a8c0e8"/><rect x="0" y="0" width="12" height="1.8" fill="#7aa0d8"/><text x="1.2" y="8.8" font-size="6.5" font-weight="bold" fill="#4a5a9a" font-family="Liberation Sans" letter-spacing="-0.6">123</text></svg>
<div class="t" style="left:103.30px;top:384.00px;font-size:10.1px;color:#4c4c4c;font-weight:normal;">activate_result_Application_Data_Types</div>
<div class="t" style="left:358.30px;top:384.00px;font-size:10.1px;color:#555555;font-weight:normal;">/myPackage/myApplicationDataTypes</div>
<svg class="a" style="left:82.5px;top:400px" width="13" height="12" viewBox="0 0 13 12"><rect x="0.5" y="0.5" width="10" height="10" fill="#fff" stroke="#8aaae0"/><rect x="0" y="0" width="11" height="2" fill="#3a6ac0"/><rect x="1" y="6" width="9" height="3" fill="#3a6ac0"/></svg>
<div class="t" style="left:103.30px;top:401.00px;font-size:10.1px;color:#4c4c4c;font-weight:normal;">DetectedTrafficSigns_Application_Data_Types</div>
<div class="t" style="left:358.30px;top:401.00px;font-size:10.1px;color:#555555;font-weight:normal;">/myPackage/myApplicationDataTypes</div>
<svg class="a" style="left:82.5px;top:417px" width="13" height="12" viewBox="0 0 13 12"><rect x="0.5" y="0.5" width="10" height="10" fill="#fff" stroke="#8aaae0"/><rect x="0" y="0" width="11" height="2" fill="#3a6ac0"/><rect x="4" y="3" width="6" height="7" fill="#3a5aa0"/><path d="M5 5h4M5 7.5h4" stroke="#fff"/></svg>
<div class="t" style="left:103.30px;top:419.00px;font-size:10.1px;color:#4c4c4c;font-weight:normal;">DetectedTrafficSign_Application_Data_Types</div>
<div class="t" style="left:358.30px;top:419.00px;font-size:10.1px;color:#555555;font-weight:normal;">/myPackage/myApplicationDataTypes</div>
<svg class="a" style="left:82.5px;top:435px" width="13" height="12" viewBox="0 0 13 12"><rect x="0.5" y="0.5" width="11" height="10" fill="#f4f8ff" stroke="#a8c0e8"/><rect x="0" y="0" width="12" height="1.8" fill="#7aa0d8"/><text x="1.2" y="8.8" font-size="6.5" font-weight="bold" fill="#4a5a9a" font-family="Liberation Sans" letter-spacing="-0.6">123</text></svg>
<div class="t" style="left:103.30px;top:437.00px;font-size:10.1px;color:#4c4c4c;font-weight:normal;">detectionReliability_Application_Data_Types</div>
<div class="t" style="left:358.30px;top:437.00px;font-size:10.1px;color:#555555;font-weight:normal;">/myPackage/myApplicationDataTypes</div>
<svg class="a" style="left:82.5px;top:453px" width="13" height="12" viewBox="0 0 13 12"><rect x="0.5" y="0.5" width="11" height="10" fill="#f4f8ff" stroke="#a8c0e8"/><rect x="0" y="0" width="12" height="1.8" fill="#7aa0d8"/><text x="1.2" y="8.8" font-size="6.5" font-weight="bold" fill="#4a5a9a" font-family="Liberation Sans" letter-spacing="-0.6">123</text></svg>
<div class="t" style="left:103.30px;top:454.00px;font-size:10.1px;color:#4c4c4c;font-weight:normal;">signDistance_Application_Data_Types</div>
<div class="t" style="left:358.30px;top:454.00px;font-size:10.1px;color:#555555;font-weight:normal;">/myPackage/myApplicationDataTypes</div>
<svg class="a" style="left:82.5px;top:470px" width="13" height="12" viewBox="0 0 13 12"><rect x="0.5" y="0.5" width="11" height="10" fill="#f4f8ff" stroke="#a8c0e8"/><rect x="0" y="0" width="12" height="1.8" fill="#7aa0d8"/><text x="1.2" y="8.8" font-size="6.5" font-weight="bold" fill="#4a5a9a" font-family="Liberation Sans" letter-spacing="-0.6">123</text></svg>
<div class="t" style="left:103.30px;top:472.00px;font-size:10.1px;color:#4c4c4c;font-weight:normal;">signType_Application_Data_Types</div>
<div class="t" style="left:358.30px;top:472.00px;font-size:10.1px;color:#555555;font-weight:normal;">/myPackage/myApplicationDataTypes</div>
<svg class="a" style="left:82.5px;top:488px" width="13" height="12" viewBox="0 0 13 12"><rect x="0.5" y="0.5" width="10" height="10" fill="#fff" stroke="#8aaae0"/><rect x="0" y="0" width="11" height="2" fill="#3a6ac0"/><rect x="4" y="3" width="6" height="7" fill="#3a5aa0"/><path d="M5 5h4M5 7.5h4" stroke="#fff"/></svg>
<div class="t" style="left:103.30px;top:489.00px;font-size:10.1px;color:#4c4c4c;font-weight:normal;">TrafficSignDetection</div>
<div class="t" style="left:358.30px;top:489.00px;font-size:10.1px;color:#555555;font-weight:normal;">/myPackage/myApplicationDataTypes</div>
<svg class="a" style="left:39px;top:508px" width="5" height="8" viewBox="0 0 5 8"><path d="M0.5 1l3.5 3-3.5 3z" fill="#666"/></svg>
<svg class="a" style="left:58.5px;top:505px" width="13" height="12" viewBox="0 0 13 12"><g transform="translate(-1.5,0)"><rect x="0" y="0.5" width="14" height="1.5" fill="#a8c8f0"/><rect x="0" y="2" width="14" height="6" fill="#f0c830"/><text x="0.8" y="7.6" font-size="6" font-weight="bold" fill="#3a3a50" font-family="Liberation Sans" letter-spacing="-0.4">TYPE</text><rect x="0" y="8" width="14" height="1.5" fill="#a8c8f0"/></g></svg>
<div class="t" style="left:79.30px;top:507.00px;font-size:10.1px;color:#4c4c4c;font-weight:normal;">Implementation Data Types</div>
<svg class="a" style="left:39px;top:526px" width="5" height="8" viewBox="0 0 5 8"><path d="M0.5 1l3.5 3-3.5 3z" fill="#666"/></svg>
<svg class="a" style="left:58.5px;top:523px" width="13" height="12" viewBox="0 0 13 12"><g transform="translate(-1.5,0)"><rect x="0" y="0.5" width="14" height="1.2" fill="#7aa0e0"/><rect x="0" y="1.7" width="14" height="2.3" fill="#f2d640"/><text x="0.8" y="10" font-size="6" font-weight="bold" fill="#2a3a70" font-family="Liberation Sans" letter-spacing="-0.4">TYPE</text></g></svg>
<div class="t" style="left:79.30px;top:524.00px;font-size:10.1px;color:#4c4c4c;font-weight:normal;">Base Types</div>
<svg class="a" style="left:39px;top:544px" width="5" height="8" viewBox="0 0 5 8"><path d="M0.5 1l3.5 3-3.5 3z" fill="#666"/></svg>
<svg class="a" style="left:58.5px;top:541px" width="13" height="12" viewBox="0 0 13 12"><g transform="translate(-1,0)"><text x="0" y="9" font-size="9.5" fill="#3a4060" font-family="Liberation Sans">[</text><text x="3.2" y="6" font-size="6" fill="#3a4060" font-family="Liberation Sans">°</text><text x="6" y="9" font-size="8" fill="#3a4a80" font-family="Liberation Sans">c</text><text x="10.5" y="9" font-size="9.5" fill="#3a4060" font-family="Liberation Sans">]</text></g></svg>
<div class="t" style="left:79.30px;top:542.00px;font-size:10.1px;color:#4c4c4c;font-weight:normal;">Units</div>
<svg class="a" style="left:39px;top:561px" width="5" height="8" viewBox="0 0 5 8"><path d="M0.5 1l3.5 3-3.5 3z" fill="#666"/></svg>
<svg class="a" style="left:58.5px;top:558px" width="13" height="12" viewBox="0 0 13 12"><g transform="translate(-1,1)"><path d="M0.5 5l3-2 2 1.5 3-3.5 3 3 2-1" fill="none" stroke="#d04858" stroke-width="1"/><rect x="0.5" y="6.5" width="13" height="4" fill="#dde8f8" stroke="#3a4a9a"/><path d="M2 8.5h10" stroke="#3a4a9a" stroke-width=".8" stroke-dasharray="1.5 .7"/></g></svg>
<div class="t" style="left:79.30px;top:560.00px;font-size:10.1px;color:#4c4c4c;font-weight:normal;">Compu Methods</div>
<svg class="a" style="left:39px;top:579px" width="5" height="8" viewBox="0 0 5 8"><path d="M0.5 1l3.5 3-3.5 3z" fill="#666"/></svg>
<svg class="a" style="left:58.5px;top:576px" width="13" height="12" viewBox="0 0 13 12"><g transform="translate(-1,0)"><rect x="3" y="3.5" width="8" height="4" fill="#c8d8f4"/><path d="M0 3.5h14M0 7.5h14" stroke="#3a4a9a" stroke-width="1"/><path d="M3.5 0v11M10.5 0v11" stroke="#c03050" stroke-width="1"/></g></svg>
<div class="t" style="left:79.30px;top:577.00px;font-size:10.1px;color:#4c4c4c;font-weight:normal;">Data Constraints</div>
<svg class="a" style="left:58.5px;top:593px" width="13" height="12" viewBox="0 0 13 12"><g transform="translate(-1,0)"><rect x="0.5" y="1.5" width="13" height="8" fill="#fff" stroke="#555"/><path d="M3 3.5v4M5 3.5v4M7.5 3.5v4M10 3.5v4" stroke="#666" stroke-width="1"/><path d="M3 5.5h2M8 5.5h2" stroke="#666" stroke-width=".8"/></g></svg>
<div class="t" style="left:79.30px;top:595.00px;font-size:10.1px;color:#4c4c4c;font-weight:normal;">Record Layouts</div>
<svg class="a" style="left:34.5px;top:611px" width="13" height="12" viewBox="0 0 13 12"><path d="M0.5 3.2c1.5-1.2 3-1.4 5-1.2h6" fill="none" stroke="#2a3a6a" stroke-width="1.3"/><path d="M3.8 2.4c0 3-0.6 5.5-1.8 7" fill="none" stroke="#2a3a6a" stroke-width="1.3"/><path d="M7.8 2.4v5.5c0 1.5 1 2 2.3 1.6" fill="none" stroke="#2a3a6a" stroke-width="1.3"/></svg>
<div class="t" style="left:55.30px;top:612.00px;font-size:10.1px;color:#4c4c4c;font-weight:normal;">Constants</div>
<svg class="a" style="left:34.5px;top:628px" width="13" height="12" viewBox="0 0 13 12"><rect x="0" y="1" width="4.5" height="3.5" fill="#4a6ab8"/><rect x="0" y="5.5" width="4.5" height="4" fill="#e0a030"/><path d="M4.5 3h3M4.5 7h3" stroke="#8a8a8a" stroke-width="1"/><rect x="7.5" y="1" width="5" height="9" rx="1.5" fill="#3a7ac8"/><rect x="8.5" y="3" width="3" height="2" fill="#9ac8f0"/></svg>
<div class="t" style="left:55.30px;top:630.00px;font-size:10.1px;color:#4c4c4c;font-weight:normal;">Mode Declaration Groups</div>
<svg class="a" style="left:15px;top:649px" width="5" height="8" viewBox="0 0 5 8"><path d="M0.5 1l3.5 3-3.5 3z" fill="#666"/></svg>
<svg class="a" style="left:34.5px;top:646px" width="13" height="12" viewBox="0 0 13 12"><g transform="translate(0,2)"><rect x="0.5" y="0.5" width="4.5" height="4.5" fill="#fff" stroke="#2a3a70"/><path d="M5 2.8h6" stroke="#2a3a70" stroke-width="1"/></g></svg>
<div class="t" style="left:55.30px;top:648.00px;font-size:10.1px;color:#4c4c4c;font-weight:normal;">Application Port Interfaces</div>
<svg class="a" style="left:15px;top:667px" width="5" height="8" viewBox="0 0 5 8"><path d="M0.5 1l3.5 3-3.5 3z" fill="#666"/></svg>
<svg class="a" style="left:34.5px;top:664px" width="13" height="12" viewBox="0 0 13 12"><g transform="translate(0,2)"><rect x="0" y="0" width="5.5" height="5" fill="#2a3070"/><path d="M5.5 2.5h5.5" stroke="#2a3070" stroke-width="1"/></g></svg>
<div class="t" style="left:55.30px;top:665.00px;font-size:10.1px;color:#4c4c4c;font-weight:normal;">Service Port Interfaces</div>
<svg class="a" style="left:14px;top:685px" width="6" height="6" viewBox="0 0 6 6"><path d="M5 0.5v4.5H0.5z" fill="#666"/></svg>
<svg class="a" style="left:34.5px;top:681px" width="13" height="12" viewBox="0 0 13 12"><g transform="translate(0,1)"><rect x="0" y="1" width="5" height="4" fill="#e07838"/><path d="M1 3h3" stroke="#fff" stroke-width=".8"/><rect x="5" y="0.5" width="7" height="7" fill="#d83858"/><path d="M6.5 3h4M6.5 5h4" stroke="#fff" stroke-width=".8"/></g></svg>
<div class="t" style="left:55.30px;top:683.00px;font-size:10.1px;color:#4c4c4c;font-weight:normal;">Type Mapping Sets</div>
<svg class="a" style="left:58.5px;top:699px" width="13" height="12" viewBox="0 0 13 12"><rect x="0" y="3" width="6" height="4" fill="#f0c040"/><rect x="0" y="7" width="6" height="2" fill="#40a8c8"/><rect x="5" y="1" width="8" height="7" fill="#d83858"/><path d="M6.5 3.5h5M6.5 5.5h5" stroke="#fff" stroke-width=".8"/></svg>
<div class="t" style="left:79.30px;top:700.00px;font-size:10.1px;color:#4c4c4c;font-weight:bold;transform:scaleX(1.0563);transform-origin:0 0;">myDataTypeMapping</div>
<div class="t" style="left:358.30px;top:700.00px;font-size:10.1px;color:#555555;font-weight:bold;transform:scaleX(1.1042);transform-origin:0 0;">/myPackage/DataTypeMappings</div>
<svg class="a" style="left:15px;top:719px" width="5" height="8" viewBox="0 0 5 8"><path d="M0.5 1l3.5 3-3.5 3z" fill="#666"/></svg>
<svg class="a" style="left:34.5px;top:716px" width="13" height="12" viewBox="0 0 13 12"><circle cx="3" cy="2" r="2" fill="#e0a020"/><path d="M2 3l3 5h4" stroke="#c08a20" stroke-width="2.5" fill="none"/><path d="M4 10l3-3h7l-3 3z" fill="#2a80e0"/></svg>
<div class="t" style="left:55.30px;top:718.00px;font-size:10.1px;color:#4c4c4c;font-weight:normal;">Blueprints</div>
<svg class="a" style="left:34.5px;top:734px" width="13" height="12" viewBox="0 0 13 12"><rect x="0.5" y="0.5" width="9" height="7" fill="#fff" stroke="#555"/><rect x="1" y="1" width="4" height="6" fill="#f0d040"/><rect x="5" y="5" width="7" height="6" fill="#2a4a8a"/><rect x="6" y="9" width="5" height="2" fill="#e0b020"/></svg>
<div class="t" style="left:55.30px;top:735.00px;font-size:10.1px;color:#4c4c4c;font-weight:normal;">Addressing Methods</div>
<div class="a" style="left:617px;top:298px;width:463px;height:478px;background:#f0f0f0;border-left:1px solid #5b5b5b;box-shadow:2px 5px 12px rgba(0,0,0,.28)"></div>
<div class="a" style="left:617px;top:298px;width:462px;height:31px;background:#fff;border:1px solid #5b5b5b;border-bottom:none"></div>
<div class="t" style="left:626.80px;top:308.00px;font-size:12px;color:#1e1e1e;font-weight:normal;">New Component Type</div>
<svg class="a" style="left:1058px;top:307px" width="11" height="11" viewBox="0 0 11 11"><path d="M0.5 0.5l10 10M10.5 0.5l-10 10" stroke="#222" stroke-width="1.1"/></svg>
<div class="a" style="left:624px;top:354px;width:448px;height:385px;background:#fefefe;border:1px solid #dcdcdc"></div>
<div class="a" style="left:683px;top:338px;width:70px;height:17px;background:#f0f0f0;border:1px solid #dcdcdc;border-bottom:none"></div>
<div class="a" style="left:753px;top:338px;width:120px;height:17px;background:#f0f0f0;border:1px solid #dcdcdc;border-bottom:none;border-left:none"></div>
<div class="a" style="left:873px;top:338px;width:49px;height:17px;background:#f0f0f0;border:1px solid #dcdcdc;border-bottom:none;border-left:none"></div>
<div class="a" style="left:922px;top:338px;width:58px;height:17px;background:#f0f0f0;border:1px solid #dcdcdc;border-bottom:none;border-left:none"></div>
<div class="a" style="left:625px;top:336px;width:58px;height:19px;background:#fefefe;border:1px solid #dcdcdc;border-bottom:none"></div>
<div class="t" style="left:631.00px;top:340.00px;font-size:10.4px;color:#222;font-weight:normal;">Properties</div>
<div class="t" style="left:687.00px;top:342.00px;font-size:10.4px;color:#222;font-weight:normal;">Mapping Sets</div>
<div class="t" style="left:758.00px;top:342.00px;font-size:10.4px;color:#222;font-weight:normal;">Included Data Type Sets</div>
<div class="t" style="left:879.00px;top:342.00px;font-size:10.4px;color:#222;font-weight:normal;">Package</div>
<div class="t" style="left:926.50px;top:342.00px;font-size:10.4px;color:#222;font-weight:normal;">Description</div>
<div class="t" style="left:636.60px;top:369.00px;font-size:10.4px;color:#222;font-weight:normal;">Name:</div>
<div class="a" style="left:672px;top:367px;width:387px;height:20px;background:#fff;border:1px solid #a8a8a8"></div>
<svg class="a" style="left:643.6px;top:404.4px" width="14" height="14" viewBox="0 0 14 14"><circle cx="7" cy="7" r="6.2" fill="#fff" stroke="#333" stroke-width="1"/></svg>
<div class="t" style="left:660.00px;top:408.00px;font-size:10.4px;color:#222;font-weight:normal;">Composition</div>
<div class="a" style="left:633.5px;top:437.5px;width:431px;height:267px;border:1px solid #dcdcdc"></div>
<div class="a" style="left:640px;top:430px;width:56px;height:14px;background:#fefefe"></div>
<svg class="a" style="left:643.6px;top:430.3px" width="14" height="14" viewBox="0 0 14 14"><circle cx="7" cy="7" r="6.2" fill="#fff" stroke="#333" stroke-width="1"/><circle cx="7" cy="7" r="3.6" fill="#222"/></svg>
<div class="t" style="left:660.00px;top:433.00px;font-size:10.4px;color:#222;font-weight:normal;">Atomic</div>
<div class="t" style="left:648.50px;top:460.00px;font-size:10.4px;color:#222;font-weight:normal;">Type:</div>
<div class="a" style="left:685px;top:453.5px;width:378px;height:18.5px;background:#e1e1e1;border:1px solid #adadad"></div>
<div class="t" style="left:689.00px;top:459.00px;font-size:10.4px;color:#1a1a1a;font-weight:normal;">Application</div>
<svg class="a" style="left:1050px;top:460px" width="8" height="5" viewBox="0 0 8 5"><path d="M0.5 0.5L4 4l3.5-3.5" fill="none" stroke="#555" stroke-width="1.1"/></svg>
<div class="t" style="left:650.00px;top:488.00px;font-size:10.4px;color:#222;font-weight:normal;">Handle Termination and Restart:</div>
<div class="a" style="left:810px;top:483.3px;width:254px;height:18.7px;background:#e1e1e1;border:1px solid #adadad"></div>
<div class="t" style="left:814.00px;top:488.00px;font-size:10.4px;color:#1a1a1a;font-weight:normal;">No Support</div>
<svg class="a" style="left:1051px;top:490px" width="8" height="5" viewBox="0 0 8 5"><path d="M0.5 0.5L4 4l3.5-3.5" fill="none" stroke="#555" stroke-width="1.1"/></svg>
<div class="a" style="left:650px;top:515.4px;width:13px;height:13px;background:#fff;border:1px solid #333"></div>
<div class="t" style="left:666.00px;top:517.00px;font-size:10.4px;color:#222;font-weight:normal;">Supports multiple instantiation</div>
<div class="t" style="left:650.00px;top:545.00px;font-size:10.4px;color:#222;font-weight:normal;">Implementation Code Type</div>
<div class="a" style="left:800px;top:549px;width:255px;height:1px;background:#dcdcdc"></div>
<svg class="a" style="left:663.5px;top:564.5px" width="14" height="14" viewBox="0 0 14 14"><circle cx="7" cy="7" r="6.2" fill="#fff" stroke="#333" stroke-width="1"/><circle cx="7" cy="7" r="3.6" fill="#222"/></svg>
<div class="t" style="left:680.00px;top:567.00px;font-size:10.4px;color:#222;font-weight:normal;">Source code</div>
<svg class="a" style="left:663.5px;top:587px" width="14" height="14" viewBox="0 0 14 14"><circle cx="7" cy="7" r="6.2" fill="#fff" stroke="#333" stroke-width="1"/></svg>
<div class="t" style="left:680.00px;top:589.00px;font-size:10.4px;color:#222;font-weight:normal;">Object code</div>
<div class="t" style="left:649.00px;top:619.00px;font-size:10.4px;color:#a6a6a6;font-weight:normal;">Symbol</div>
<div class="a" style="left:701px;top:622.5px;width:362px;height:1px;background:#dcdcdc"></div>
<div class="t" style="left:658.00px;top:639.00px;font-size:10.4px;color:#a6a6a6;font-weight:normal;">Short Name:</div>
<div class="a" style="left:741px;top:635px;width:305px;height:19.5px;background:#fff;border:1px solid #a8a8a8"></div>
<div class="t" style="left:658.00px;top:669.00px;font-size:10.4px;color:#a6a6a6;font-weight:normal;">Code</div>
<div class="a" style="left:741px;top:664.5px;width:305px;height:22px;background:#fff;border:1px solid #a8a8a8"></div>
<div class="a" style="left:852.6px;top:748px;width:69px;height:21px;background:#e1e1e1;border:2px solid #0078d7"></div>
<div class="a" style="left:928.4px;top:748px;width:70px;height:21px;background:#e1e1e1;border:1px solid #adadad"></div>
<div class="a" style="left:1004.2px;top:748px;width:69px;height:21px;background:#e1e1e1;border:1px solid #adadad"></div>
<div class="t" style="left:852.50px;top:755.00px;width:69px;text-align:center;font-size:10.4px;color:#1a1a1a;font-weight:normal">OK</div>
<div class="t" style="left:928.40px;top:755.00px;width:70px;text-align:center;font-size:10.4px;color:#1a1a1a;font-weight:normal">Cancel</div>
<div class="t" style="left:1004.20px;top:755.00px;width:69px;text-align:center;font-size:10.4px;color:#1a1a1a;font-weight:normal">Apply now</div>
<svg class="a" style="left:1069px;top:765px" width="10" height="10" viewBox="0 0 10 10"><path d="M9 1L1 9M9 4L4 9M9 7L7 9" stroke="#aaa" stroke-width="1"/></svg>
<div class="a" style="left:4px;top:200px;width:607px;height:128px;border:4px solid #e3131e"></div>
<div class="a" style="left:619px;top:394px;width:461px;height:84px;border:4px solid #e3131e"></div>
</div></body></html>
